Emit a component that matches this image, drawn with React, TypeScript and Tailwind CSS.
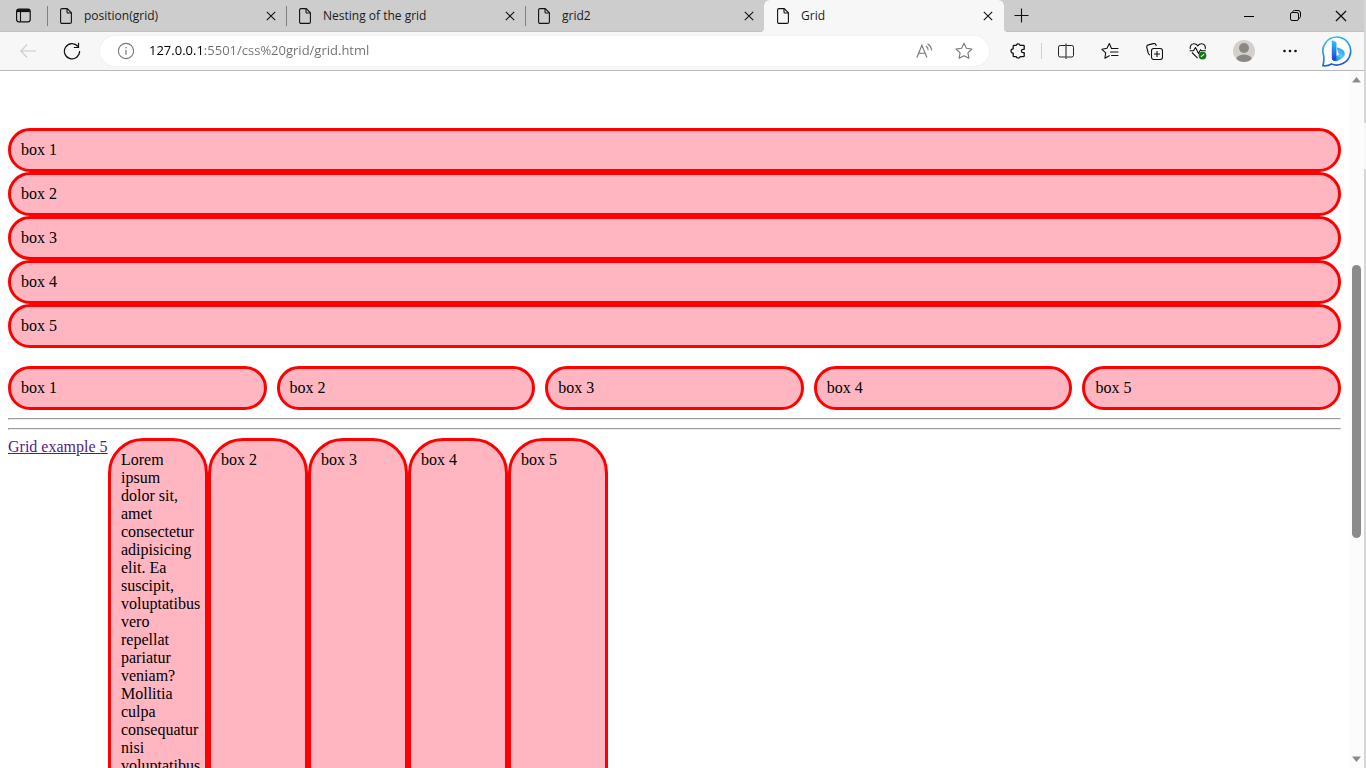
import type { ReactNode } from "react";

const BOXES = ["box 1", "box 2", "box 3", "box 4", "box 5"];

const LOREM =
  "Lorem ipsum dolor sit, amet consectetur adipisicing elit. Ea suscipit, voluptatibus vero repellat pariatur veniam? Mollitia culpa consequatur nisi voluptatibus";

function FileIcon() {
  return (
    <svg width="12" height="16" viewBox="0 0 12 16" fill="none" stroke="#111" strokeWidth="1.1" className="shrink-0" aria-hidden="true">
      <path d="M.6 2A1.4 1.4 0 0 1 2 .6h5.2l4.2 4.2V14a1.4 1.4 0 0 1-1.4 1.4H2A1.4 1.4 0 0 1 .6 14z" />
      <path d="M7 .8v3.2a1 1 0 0 0 1 1h3.2" />
    </svg>
  );
}

function CloseIcon({ size = 10 }: { size?: number }) {
  return (
    <svg width={size} height={size} viewBox="0 0 10 10" stroke="#111" strokeWidth="1.1" aria-hidden="true">
      <path d="M.8.8l8.4 8.4M9.2.8L.8 9.2" />
    </svg>
  );
}

function Tab({ title, active = false }: { title: string; active?: boolean }) {
  return (
    <div className={active ? "flex w-60 rounded-t-md bg-[#f7f7f7] pl-[13px] pr-[11px]" : "flex h-full w-[239px] items-center"}>
      {!active && <span className="h-5 w-px shrink-0 bg-[#808080]" />}
      <div className={active ? "flex min-w-0 flex-1 items-center gap-3" : "flex min-w-0 flex-1 items-center gap-3 pl-3 pr-2.5"}>
        <FileIcon />
        <span className="min-w-0 flex-1 truncate text-xs text-[#1b1b1b]">{title}</span>
        <button type="button" aria-label={`Close ${title}`}>
          <CloseIcon />
        </button>
      </div>
    </div>
  );
}

function ToolButton({ label, width, children }: { label: string; width: string; children: ReactNode }) {
  return (
    <button type="button" aria-label={label} className={`flex h-8 shrink-0 items-center justify-center ${width}`}>
      {children}
    </button>
  );
}

function TabStrip() {
  return (
    <div className="flex h-8 bg-[linear-gradient(#cdcdcd_50%,#f7f7f7_50%)]">
      <div className="flex items-center rounded-br border-b border-[#c2c2c2] bg-[#cdcdcd]">
        <ToolButton label="Tab actions" width="w-[47px]">
          <svg width="15" height="15" viewBox="0 0 15 15" fill="none" stroke="#111" aria-hidden="true">
            <rect x=".6" y="1" width="13.6" height="12.8" rx="2.2" strokeWidth="1.2" />
            <path d="M1 2.6h12.8" strokeWidth="3" />
            <path d="M4.5 4v9.6" strokeWidth="1.1" />
          </svg>
        </ToolButton>
        <Tab title="position(grid)" />
        <Tab title="Nesting of the grid" />
        <Tab title="grid2" />
      </div>
      <Tab title="Grid" active />
      <div className="flex flex-1 items-center rounded-bl border-b border-[#c2c2c2] bg-[#cdcdcd]">
        <ToolButton label="New tab" width="w-[35px]">
          <svg width="15" height="15" viewBox="0 0 15 15" stroke="#111" strokeWidth="1.1" aria-hidden="true">
            <path d="M7.5.5v14M.5 7.5h14" />
          </svg>
        </ToolButton>
        <div className="ml-auto flex">
          <ToolButton label="Minimize" width="w-[46px]">
            <svg width="10" height="10" viewBox="0 0 10 10" stroke="#000" aria-hidden="true">
              <path d="M0 5.5h10" />
            </svg>
          </ToolButton>
          <ToolButton label="Restore" width="w-[46px]">
            <svg width="11" height="11" viewBox="0 0 11 11" fill="none" stroke="#000" aria-hidden="true">
              <rect x=".5" y="2.5" width="8" height="8" rx="1.6" />
              <path d="M2.6 2.3C2.8 1.1 3.4.5 4.6.5H8a2.5 2.5 0 0 1 2.500 2.500v3.400c0 1.200-.6 1.800-1.800 2" />
            </svg>
          </ToolButton>
          <ToolButton label="Close window" width="w-[46px]">
            <CloseIcon size={12} />
          </ToolButton>
        </div>
      </div>
    </div>
  );
}

function BingLogo() {
  return (
    <svg width="32" height="32" viewBox="0 0 32 32" fill="none" aria-hidden="true">
      <defs>
        <linearGradient id="bubble" x1="8" y1="2" x2="18" y2="31" gradientUnits="userSpaceOnUse">
          <stop stopColor="#2fc3f2" />
          <stop offset=".55" stopColor="#2a8de6" />
          <stop offset="1" stopColor="#2450c8" />
        </linearGradient>
        <linearGradient id="stem" x1="12" y1="6" x2="12" y2="24" gradientUnits="userSpaceOnUse">
          <stop stopColor="#35c0f5" />
          <stop offset="1" stopColor="#1b46d8" />
        </linearGradient>
        <linearGradient id="bowl" x1="22" y1="13" x2="12" y2="25" gradientUnits="userSpaceOnUse">
          <stop stopColor="#2f8ff0" />
          <stop offset=".5" stopColor="#4fd0f7" />
          <stop offset="1" stopColor="#1e5be0" />
        </linearGradient>
      </defs>
      <path d="M16.3 2A14 14 0 1 1 10.5 29C7.5 30.8 4.6 31 1.9 30.7 2.7 28 3.2 25.500 2.800 21A14 14 0 0 1 16.300 2z" fill="#fff" stroke="url(#bubble)" strokeWidth="1.700" />
      <path d="M16 13.800c-.3-.9.2-1.600 1.200-1.200l4 1.900a4.800 4.800 0 0 1 1.700 7.100c-1.900 2.400-4.400 3.300-6.800 4.400-2.400 1-5.100-.6-5.100-3.300l4-1.400 3.200-2-1.200-1.500z" fill="url(#bowl)" />
      <path d="M10.800 6.600c0-.9.7-1.300 1.400-1l2.300 1.100c.7.3 1 .9 1 1.600v13.200c0 2.900-1.500 4.800-2.800 4.300-1.200-.6-1.900-1.700-1.900-2.900z" fill="url(#stem)" />
    </svg>
  );
}

function Toolbar() {
  return (
    <div className="flex h-[39px] items-center border-b border-[#b9b9b9] bg-[#f7f7f7] pl-1.5 pr-0.5">
      <ToolButton label="Back" width="w-11">
        <svg width="16" height="14" viewBox="0 0 16 14" fill="none" stroke="#c9c9c9" strokeWidth="1.1" aria-hidden="true">
          <path d="M7 .6L.8 7 7 13.400M.8 7H16" />
        </svg>
      </ToolButton>
      <ToolButton label="Refresh" width="w-11">
        <svg width="18" height="18" viewBox="0 0 18 18" fill="none" stroke="#111" strokeWidth="1.200" aria-hidden="true">
          <path d="M16.600 9A7.600 7.600 0 1 1 14.900 4.500" />
          <path d="M15.500.8v4.700h-4.700" />
        </svg>
      </ToolButton>
      <div className="ml-1.5 flex h-[30px] min-w-0 flex-1 items-center rounded-full bg-white pl-[17px] pr-[5px] shadow-[0_0_2px_rgba(0,0,0,0.08)]">
        <svg width="18" height="18" viewBox="0 0 18 18" fill="none" stroke="#767676" className="shrink-0" aria-hidden="true">
          <circle cx="9" cy="9" r="7.600" strokeWidth="1.100" />
          <path d="M9 8v4.700" strokeWidth="1.200" />
          <circle cx="9" cy="5.700" r=".8" fill="#767676" stroke="none" />
        </svg>
        <input
          type="text"
          aria-label="Address"
          defaultValue="127.0.0.1:5501/css%20grid/grid.html"
          className="ml-3.5 min-w-0 flex-1 bg-[linear-gradient(to_right,#000_54px,#6f6f6f_54px)] bg-clip-text text-[13px] text-transparent outline-none"
        />
        <ToolButton label="Read aloud" width="w-10">
          <svg width="17" height="16" viewBox="0 0 17 16" fill="none" stroke="#767676" strokeWidth="1.100" strokeLinecap="round" aria-hidden="true">
            <path d="M1 14.300L5.900 2.200l4.900 12.100M2.700 10.200h6.400" />
            <path d="M10.200 3.200c1.200.9 1.800 2 1.900 3.500M11.800 1c2.300 1.400 3.500 3.400 3.700 6" />
          </svg>
        </ToolButton>
        <ToolButton label="Add to favorites" width="w-10">
          <svg width="18" height="18" viewBox="0 0 18 18" fill="none" stroke="#767676" strokeWidth="1.100" strokeLinejoin="round" aria-hidden="true">
            <path d="M9 1.200l2.400 5 5.500.8-4 3.800 1 5.500L9 13.700l-4.900 2.600 1-5.500-4-3.800 5.500-.8z" />
          </svg>
        </ToolButton>
      </div>
      <div className="ml-1.5 flex items-center">
        <ToolButton label="Extensions" width="w-[46px]">
          <svg width="16" height="18" viewBox="0 0 16 18" fill="none" stroke="#111" strokeWidth="1.300" strokeLinejoin="round" aria-hidden="true">
            <path d="M6.300 3.300a2 2 0 0 1 3.800 0h3.300a.8.8 0 0 1 .8.800v3.200h-1.100a1.700 1.700 0 0 0 0 3.400h1.100v3.200a.8.8 0 0 1-.8.800h-3.300a2 2 0 0 1-3.800 0H4a.8.8 0 0 1-.8-.8v-2.700a2.200 2.200 0 0 1 0-4.400V4.100a.8.8 0 0 1 .8-.8z" />
          </svg>
        </ToolButton>
        <span className="mr-0.5 h-4 w-px bg-[#cfcfcf]" />
        <ToolButton label="Split screen" width="w-11">
          <svg width="16" height="16" viewBox="0 0 16 16" fill="none" stroke="#222" aria-hidden="true">
            <rect x=".5" y="2.500" width="15" height="11.500" rx="1.700" />
            <path d="M8 .5v15.500" strokeWidth="1.400" stroke="#555" />
          </svg>
        </ToolButton>
        <ToolButton label="Favorites" width="w-11">
          <svg width="18" height="18" viewBox="0 0 18 18" fill="none" stroke="#111" strokeWidth="1.100" strokeLinejoin="round" strokeLinecap="round" aria-hidden="true">
            <path d="M10.500 6.500L8.300 1.500 6 6.300 1 7.300l3.700 3.500-.8 5.500L8.300 13.800" />
            <path d="M10.500 6.500h6.500M9.500 10h7.500M10.500 13.500h6.500" />
          </svg>
        </ToolButton>
        <ToolButton label="Collections" width="w-11">
          <svg width="17" height="17" viewBox="0 0 17 17" fill="none" stroke="#111" strokeWidth="1.100" strokeLinejoin="round" aria-hidden="true">
            <path d="M3.900 11.900A2.400 2.400 0 0 1 2.200 10L.8 4.500a2.100 2.100 0 0 1 1.500-2.600l5.200-1.300A2.100 2.100 0 0 1 10 2l.3 1" />
            <rect x="5.500" y="5.500" width="11" height="11" rx="2.200" />
            <path d="M11 8v6M8 11h6" />
          </svg>
        </ToolButton>
        <ToolButton label="Browser essentials" width="w-11">
          <svg width="18" height="18" viewBox="0 0 18 18" fill="none" stroke="#111" strokeWidth="1.100" strokeLinejoin="round" aria-hidden="true">
            <path d="M1.300 7.200C.7 3.800 2.600 1.700 5 1.700c1.700 0 3 .9 3.800 2.200.8-1.300 2.100-2.200 3.800-2.200 2.400 0 4.300 2.100 3.700 5.500M3 10.500l5.600 5.600" />
            <path d="M.6 8.800h3.900l2-3.300 3 6 2.100-3.800.8 1.100h4.400" />
            <circle cx="13.500" cy="13.600" r="3.900" fill="#107c10" stroke="none" />
            <path d="M11.900 14.900l3.200-2.600" stroke="#fff" />
          </svg>
        </ToolButton>
        <ToolButton label="Profile" width="w-12">
          <svg width="22" height="22" viewBox="0 0 22 22" aria-hidden="true">
            <clipPath id="avatar">
              <circle cx="11" cy="11" r="11" />
            </clipPath>
            <g clipPath="url(#avatar)">
              <path d="M0 0h22v22H0z" fill="#d3d0cc" />
              <circle cx="11" cy="8" r="5" fill="#8b8784" />
              <ellipse cx="11" cy="20" rx="8" ry="5.600" fill="#8b8784" />
            </g>
          </svg>
        </ToolButton>
        <ToolButton label="Settings and more" width="w-11">
          <svg width="14" height="4" viewBox="0 0 14 4" fill="#111" aria-hidden="true">
            <circle cx="1.500" cy="2" r="1.300" />
            <circle cx="7" cy="2" r="1.300" />
            <circle cx="12.500" cy="2" r="1.300" />
          </svg>
        </ToolButton>
        <ToolButton label="Bing" width="w-[50px]">
          <BingLogo />
        </ToolButton>
      </div>
    </div>
  );
}

function Box({ children }: { children: ReactNode }) {
  return <div className="rounded-[35px] border-[3px] border-[#ff0000] bg-[#ffb6c1] p-2.5">{children}</div>;
}

function Rule() {
  return <hr className="my-2 border border-b-[#eeeeee] border-l-[#9a9a9a] border-r-[#eeeeee] border-t-[#9a9a9a]" />;
}

function Page() {
  return (
    <main className="min-w-0 flex-1 overflow-hidden bg-white px-2 pt-[57px] font-['Liberation_Serif',serif] text-base leading-[18px] text-black">
      <section className="grid">
        {BOXES.map((label) => (
          <Box key={label}>{label}</Box>
        ))}
      </section>
      <section className="mt-[18px] grid grid-cols-5 gap-2.5">
        {BOXES.map((label) => (
          <Box key={label}>{label}</Box>
        ))}
      </section>
      <Rule />
      <Rule />
      <section className="grid min-h-96 grid-cols-[repeat(6,100px)]">
        <div>
          <a href="#example-5" className="whitespace-nowrap text-[#551a8b] underline">
            Grid example 5
          </a>
        </div>
        <Box>{LOREM}</Box>
        {BOXES.slice(1).map((label) => (
          <Box key={label}>{label}</Box>
        ))}
      </section>
    </main>
  );
}

function ScrollBar() {
  return (
    <div className="flex w-[15px] shrink-0 flex-col items-center bg-[#fcfcfc] py-1.5" aria-hidden="true">
      <svg width="9" height="6" viewBox="0 0 9 6" fill="#8b8b8b">
        <path d="M4.500 0L9 5.500H0z" />
      </svg>
      <div className="flex w-[9px] flex-1 flex-col">
        <span className="grow-[182]" />
        <span className="grow-[273] rounded-full bg-[#8b8b8b]" />
        <span className="grow-[218]" />
      </div>
      <svg width="9" height="6" viewBox="0 0 9 6" fill="#8b8b8b">
        <path d="M4.500 6L9 .5H0z" />
      </svg>
    </div>
  );
}

export default function App() {
  return (
    <div className="flex h-screen overflow-hidden font-['Open_Sans',sans-serif]">
      <div className="flex min-w-0 flex-1 flex-col">
        <header>
          <TabStrip />
          <Toolbar />
        </header>
        <div className="flex min-h-0 flex-1">
          <Page />
          <ScrollBar />
        </div>
      </div>
      <div className="flex w-0.5 flex-col bg-[#d6d6d6] pt-[123px]">
        <span className="h-[46px] bg-[#f7f7f7]" />
      </div>
    </div>
  );
}
